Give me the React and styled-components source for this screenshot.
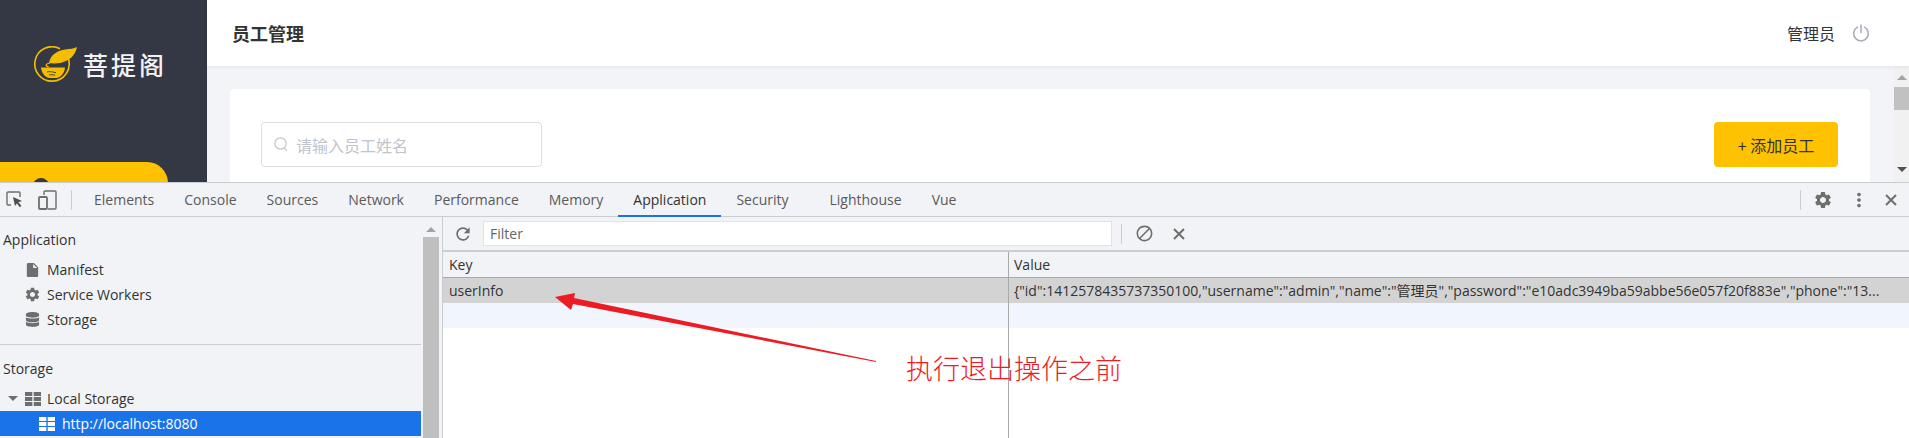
import styled, { createGlobalStyle } from "styled-components";
import { MdSettings, MdInsertDriveFile, MdRefresh, MdBlock, MdMoreVert } from "react-icons/md";
import { FaDatabase } from "react-icons/fa";

const cjk = `"Noto Sans CJK SC", "Noto Sans", sans-serif`;
const ui = `"Open Sans", "Noto Sans CJK SC", sans-serif`;

const GlobalStyle = createGlobalStyle`
  html, body { margin: 0; padding: 0; background: #fff; overflow: hidden; }
  * { box-sizing: border-box; }
`;

const Page = styled.div`
  position: relative;
  width: 1909px;
  height: 438px;
  overflow: hidden;
  display: flex;
  flex-direction: column;
`;

/* admin page behind the devtools */
const Site = styled.div`
  height: 182px;
  flex: none;
  display: flex;
  overflow: hidden;
  font-family: ${cjk};
`;
const Sidebar = styled.aside`
  width: 207px;
  background: #343744;
  display: flex;
  flex-direction: column;
  overflow: hidden;
`;
const Logo = styled.div`
  height: 116px;
  flex: none;
  padding: 46px 0 0 34px;
  display: flex;
  align-items: flex-start;
  gap: 5px;
`;
const LogoText = styled.span`
  color: #f2f2f4;
  font-size: 25px;
  line-height: 36px;
  letter-spacing: 3px;
  font-weight: 500;
`;
const ActiveMenu = styled.div`
  width: 168px;
  height: 60px;
  flex: none;
  margin-top: 46px;
  background: #ffc200;
  border-top-right-radius: 21px;
  padding: 16px 0 0 33px;
`;
const MenuIcon = styled.div`
  width: 16px;
  height: 16px;
  border-radius: 50%;
  background: #3a3a3a;
`;
const Main = styled.div`
  flex: 1;
  display: flex;
  flex-direction: column;
  background: #f3f4f7;
`;
const Header = styled.header`
  height: 66px;
  flex: none;
  background: #fff;
  box-shadow: 0 1px 4px rgba(0, 0, 0, 0.07);
  display: flex;
  align-items: center;
  justify-content: space-between;
  padding: 0 39px 0 25px;
  position: relative;
`;
const PageTitle = styled.h1`
  margin: 0;
  font-size: 18px;
  font-weight: 700;
  color: #333;
`;
const UserBox = styled.div`
  display: flex;
  align-items: center;
  gap: 17px;
  font-size: 16px;
  color: #333;
`;
const Body = styled.div`
  flex: 1;
  display: flex;
  min-height: 0;
`;
const Content = styled.div`
  flex: 1;
  padding: 23px 24px 0 23px;
`;
const Card = styled.div`
  height: 93px;
  background: #fff;
  border-radius: 4px 4px 0 0;
  padding: 33px 32px 0 31px;
  display: flex;
  justify-content: space-between;
  align-items: flex-start;
`;
const SearchBox = styled.div`
  width: 281px;
  height: 45px;
  border: 1px solid #dcdfe6;
  border-radius: 4px;
  display: flex;
  align-items: center;
  padding-left: 12px;
  gap: 8px;
  font-size: 16px;
  color: #c0c4cc;
`;
const AddButton = styled.button`
  width: 124px;
  height: 45px;
  border: 0;
  border-radius: 4px;
  background: #ffc200;
  color: #333;
  font-family: ${cjk};
  font-size: 16px;
  padding: 0;
`;
const PageScroll = styled.div`
  width: 15px;
  background: #f1f1f1;
  display: flex;
  flex-direction: column;
  align-items: center;
  padding-top: 9px;
`;
const Arrow = styled.div`
  width: 0;
  height: 0;
  flex: none;
  border-left: 5px solid transparent;
  border-right: 5px solid transparent;
  border-${(p) => (p.$down ? "top" : "bottom")}: 5px solid ${(p) => p.$color || "#a3a3a3"};
`;
const PageThumb = styled.div`
  width: 100%;
  height: 23px;
  margin: 7px 0 57px;
  background: #c1c1c1;
`;

/* devtools */
const Devtools = styled.div`
  flex: 1;
  min-height: 0;
  display: flex;
  flex-direction: column;
  background: #f1f3f6;
  border-top: 1px solid #c9ccd1;
  font-family: ${ui};
  font-size: 14px;
  color: #333;
`;
const TabBar = styled.div`
  height: 34px;
  flex: none;
  display: flex;
  align-items: stretch;
  border-bottom: 1px solid #cacdd1;
  padding-left: 6px;
`;
const ToolIcons = styled.div`
  display: flex;
  align-items: center;
  gap: 15px;
  width: 65px;
`;
const VSep = styled.div`
  width: 1px;
  height: 20px;
  background: #c9ccd1;
  flex: none;
  align-self: center;
`;
const Tabs = styled.nav`
  display: flex;
  flex: 1;
  padding-left: 7px;
`;
const Tab = styled.div`
  display: flex;
  align-items: center;
  padding: 1px 15px 0;
  margin-left: ${(p) => (p.$gap ? "11px" : "0")};
  color: ${(p) => (p.$active ? "#333" : "#5a5a5a")};
  border-bottom: 2px solid ${(p) => (p.$active ? "#1a73e8" : "transparent")};
  margin-bottom: -1px;
`;
const TabActions = styled.div`
  display: flex;
  align-items: center;
  color: #6e6e6e;
  width: 109px;
`;
const ActionSlot = styled.div`
  display: flex;
  align-items: center;
  justify-content: center;
  width: ${(p) => p.$w}px;
`;
const Panels = styled.div`
  flex: 1;
  min-height: 0;
  display: flex;
`;
const SideNav = styled.div`
  width: 421px;
  flex: none;
  padding-top: 10px;
`;
const NavHeading = styled.div`
  height: 30px;
  line-height: 26px;
  padding-left: 3px;
  color: #333;
`;
const NavItem = styled.div`
  height: 25px;
  display: flex;
  align-items: center;
  padding-left: ${(p) => p.$indent}px;
  gap: ${(p) => p.$gap || 6}px;
  background: ${(p) => (p.$selected ? "#1a73e8" : "transparent")};
  color: ${(p) => (p.$selected ? "#fff" : "#333")};
`;
const NavIcon = styled.span`
  width: 17px;
  display: flex;
  justify-content: center;
  color: #6e6e6e;
`;
const Divider = styled.div`
  height: 1px;
  background: #cacdd1;
  margin: 12px 0 11px;
`;
const NavScroll = styled.div`
  width: 22px;
  flex: none;
  padding: 10px 3px 0 2px;
  display: flex;
  flex-direction: column;
  align-items: center;
  border-right: 1px solid #c9ccd1;
`;
const NavThumb = styled.div`
  width: 100%;
  flex: 1;
  margin-top: 5px;
  background: #bfbfbf;
`;
const StoragePane = styled.div`
  flex: 1;
  display: flex;
  flex-direction: column;
  min-width: 0;
  background: #fff;
`;
const FilterBar = styled.div`
  height: 33px;
  flex: none;
  background: #f1f3f6;
  display: flex;
  align-items: center;
  color: #6e6e6e;
  padding-left: 10px;
`;
const FilterInput = styled.div`
  width: 629px;
  height: 25px;
  margin: 0 9px 0 10px;
  background: #fff;
  border: 1px solid #e0e2e5;
  padding-left: 6px;
  line-height: 23px;
  color: #666;
`;
const TableGrid = styled.div`
  flex: 1;
  display: grid;
  grid-template-columns: 565px 1fr;
  grid-template-rows: 26px 25px 25px 1fr;
  border-top: 2px solid #cacdd1;
`;
const Cell = styled.div`
  padding-left: ${(p) => (p.$first ? 6 : 5)}px;
  line-height: 25px;
  white-space: nowrap;
  overflow: hidden;
  color: #333;
  background: ${(p) => p.$bg || "#fff"};
  border-left: ${(p) => (p.$first ? "0" : "1px solid #a9a9a9")};
  border-bottom: ${(p) => (p.$head ? "1px solid #a9a9a9" : "0")};
`;

/* red note drawn over the screenshot */
const Annotation = styled.svg`
  position: absolute;
  left: 0;
  top: 0;
  pointer-events: none;
`;
const NoteText = styled.div`
  position: absolute;
  left: 906px;
  top: 349px;
  font-family: ${cjk};
  font-size: 27px;
  line-height: 38px;
  font-weight: 300;
  color: #ed1c24;
  white-space: nowrap;
`;

const Power = () => (
  <svg width="18" height="18" viewBox="0 0 18 18" fill="none" stroke="#a6abb8" strokeWidth="1.5" strokeLinecap="round">
    <path d="M5.5 3.2a7.3 7.3 0 1 0 7 0" />
    <path d="M9 1v7.5" />
  </svg>
);

const SearchIcon = () => (
  <svg width="14" height="15" viewBox="0 0 14 15" fill="none" stroke="#c0c4cc" strokeWidth="1.2">
    <circle cx="6.5" cy="6.5" r="5.6" />
    <path d="M10.5 10.8l2.5 3" />
  </svg>
);

const LogoMark = () => (
  <svg width="44" height="36" viewBox="0 0 44 36" fill="none">
    <path d="M26 2.700A17.200 17.200 0 1 0 34.500 13" stroke="#f5bd00" strokeWidth="1.600" />
    <path d="M15 17C16 9 24 4 31 3.500C36 3 40 2.500 43 1C42 6 39 11 34 14C28 17.500 21 18 15 17z" fill="#f5bd00" />
    <path d="M16 17C11 18 11 20 15 21" stroke="#f5bd00" strokeWidth="1.200" />
    <path d="M7 21.500H31C30.500 27 27 31 23 32H15C11 31 7.500 27 7 21.500z" fill="#f5bd00" />
    <path d="M13 26c3-1 6 0 9 .8M15 29c2-.6 4-.2 6 .2" stroke="#343744" strokeWidth=".9" />
  </svg>
);

const InspectIcon = () => (
  <svg width="17" height="19" viewBox="0 0 17 19" fill="none">
    <path d="M5 15H2a1 1 0 0 1-1-1V3a1 1 0 0 1 1-1h11a1 1 0 0 1 1 1v4" stroke="#6e6e6e" strokeWidth="1.400" />
    <path d="M7 7l9 4-3.600 1.300 3 3.500-1.500 1.400-3-3.600L9 16z" fill="#4f4f4f" />
  </svg>
);

const DeviceIcon = () => (
  <svg width="19" height="20" viewBox="0 0 19 20" fill="none" stroke="#6e6e6e" strokeWidth="1.400">
    <path d="M6 5V2a1 1 0 0 1 1-1h10a1 1 0 0 1 1 1v16a1 1 0 0 1-1 1h-7" />
    <rect x="1" y="7" width="8" height="12" rx="1" strokeWidth="1.800" />
  </svg>
);

const CloseIcon = () => (
  <svg width="12" height="12" viewBox="0 0 12 12" stroke="currentColor" strokeWidth="2">
    <path d="M1 1l10 10M11 1L1 11" />
  </svg>
);

const GridIcon = ({ color }) => (
  <svg width="16" height="14" viewBox="0 0 16 14" fill={color}>
    <rect x="0" y="0" width="7.300" height="4" />
    <rect x="8.700" y="0" width="7.300" height="4" />
    <rect x="0" y="5" width="7.300" height="4" />
    <rect x="8.700" y="5" width="7.300" height="4" />
    <rect x="0" y="10" width="7.300" height="4" />
    <rect x="8.700" y="10" width="7.300" height="4" />
  </svg>
);

const tabs = ["Elements", "Console", "Sources", "Network", "Performance", "Memory", "Application", "Security", "Lighthouse", "Vue"];

const rawValue = `{"id":1412578435737350100,"username":"admin","name":"管理员","password":"e10adc3949ba59abbe56e057f20f883e","phone":"13...`;

export default function App() {
  return (
    <Page>
      <GlobalStyle />
      <Site>
        <Sidebar>
          <Logo>
            <LogoMark />
            <LogoText>菩提阁</LogoText>
          </Logo>
          <ActiveMenu>
            <MenuIcon />
          </ActiveMenu>
        </Sidebar>
        <Main>
          <Header>
            <PageTitle>员工管理</PageTitle>
            <UserBox>
              管理员
              <Power />
            </UserBox>
          </Header>
          <Body>
            <Content>
              <Card>
                <SearchBox>
                  <SearchIcon />
                  请输入员工姓名
                </SearchBox>
                <AddButton>+ 添加员工</AddButton>
              </Card>
            </Content>
            <PageScroll>
              <Arrow $color="#a3a3a3" />
              <PageThumb />
              <Arrow $down $color="#505050" />
            </PageScroll>
          </Body>
        </Main>
      </Site>

      <Devtools>
        <TabBar>
          <ToolIcons>
            <InspectIcon />
            <DeviceIcon />
          </ToolIcons>
          <VSep />
          <Tabs>
            {tabs.map((t) => (
              <Tab key={t} $active={t === "Application"} $gap={t === "Lighthouse"}>
                {t}
              </Tab>
            ))}
          </Tabs>
          <TabActions>
            <VSep />
            <ActionSlot $w={44}>
              <MdSettings size={20} />
            </ActionSlot>
            <ActionSlot $w={27}>
              <MdMoreVert size={22} />
            </ActionSlot>
            <ActionSlot $w={37}>
              <CloseIcon />
            </ActionSlot>
          </TabActions>
        </TabBar>
        <Panels>
          <SideNav>
            <NavHeading>Application</NavHeading>
            <NavItem $indent={24}>
              <NavIcon>
                <MdInsertDriveFile size={18} />
              </NavIcon>
              Manifest
            </NavItem>
            <NavItem $indent={24}>
              <NavIcon>
                <MdSettings size={19} />
              </NavIcon>
              Service Workers
            </NavItem>
            <NavItem $indent={24}>
              <NavIcon>
                <FaDatabase size={15} />
              </NavIcon>
              Storage
            </NavItem>
            <Divider />
            <NavHeading>Storage</NavHeading>
            <NavItem $indent={8} $gap={6.5}>
              <Arrow $down $color="#6e6e6e" />
              <GridIcon color="#6e6e6e" />
              Local Storage
            </NavItem>
            <NavItem $indent={39} $gap={7} $selected>
              <GridIcon color="#fff" />
              http://localhost:8080
            </NavItem>
          </SideNav>
          <NavScroll>
            <Arrow />
            <NavThumb />
          </NavScroll>
          <StoragePane>
            <FilterBar>
              <MdRefresh size={20} />
              <FilterInput>Filter</FilterInput>
              <VSep />
              <ActionSlot $w={44}>
                <MdBlock size={19} />
              </ActionSlot>
              <ActionSlot $w={26}>
                <CloseIcon />
              </ActionSlot>
            </FilterBar>
            <TableGrid>
              <Cell $first $head $bg="#f1f3f6">Key</Cell>
              <Cell $head $bg="#f1f3f6">Value</Cell>
              <Cell $first $bg="#d3d3d3">userInfo</Cell>
              <Cell $bg="#d3d3d3">{rawValue}</Cell>
              <Cell $first $bg="#f1f6fe" />
              <Cell $bg="#f1f6fe" />
              <Cell $first />
              <Cell />
            </TableGrid>
          </StoragePane>
        </Panels>
      </Devtools>

      <Annotation width="1909" height="438" viewBox="0 0 1909 438">
        <path d="M555 297L575 293 574 298 876 361 876 362 573 304 571 310z" fill="#ed1c24" />
      </Annotation>
      <NoteText>执行退出操作之前</NoteText>
    </Page>
  );
}
